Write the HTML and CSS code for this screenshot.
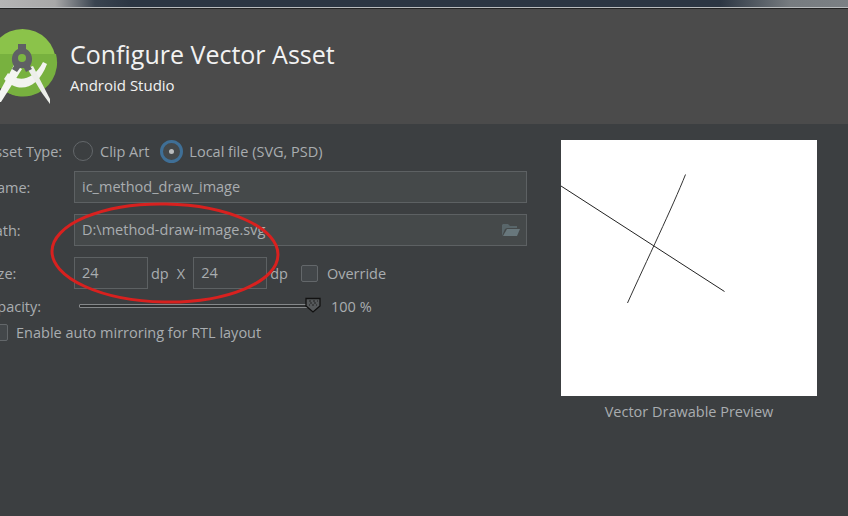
FILE: index.html
```html
<!DOCTYPE html>
<html lang="en">
<head>
    <meta charset="UTF-8">
    <title>Configure Vector Asset</title>
    <link rel="stylesheet" href="styles.css">
</head>
<body>
    <div class="desktop-strip"></div>
    <header class="banner">
        <svg class="logo" width="70" height="84" viewBox="0 0 70 84">
            <circle cx="33.500" cy="33.500" r="33.500" fill="#8bc34a"/>
            <path d="M1 25L67 25A33.500 33.500 0 0 1 1 42Z" fill="#78b13f"/>
            <path d="M19 44C27 52 43 54 54 33L58 35C48 62 28 64 15 50Z" fill="#f2f3f0"/>
            <path d="M25 36L33 40L12 73L5 73Z" fill="#f4f5f2"/>
            <path d="M38 39L44 37L61 70L61 75L53 64Z" fill="#eceeea"/>
            <path d="M29 15L37 15L37 20C43 23 45 31 41 37L43 40L37 43L35 39L31 39L28 43L23 40L25 37C21 31 23 23 29 20Z" fill="#5f6064"/>
            <circle cx="33" cy="29" r="4" fill="#7cb642"/>
        </svg>
        <div class="banner-text">
            <h1>Configure Vector Asset</h1>
            <p>Android Studio</p>
        </div>
    </header>
    <main class="content">
        <form class="form">
            <div class="row row-type">
                <span class="label">Asset Type:</span>
                <span class="radio"></span>
                <span class="radio-text">Clip Art</span>
                <span class="radio radio-on"></span>
                <span>Local file (SVG, PSD)</span>
            </div>
            <div class="row row-field">
                <span class="label">Name:</span>
                <div class="field">ic_method_draw_image</div>
            </div>
            <div class="row row-field">
                <span class="label">Path:</span>
                <div class="field">
                    D:\method-draw-image.svg
                    <svg class="folder" width="20" height="14" viewBox="0 0 20 14">
                        <path d="M1 13L1 2L2 1L7 1L9 3L16 3L16 5L6 5L4 6Z" fill="#59666a"/>
                        <path d="M2 13L6 6L19 6L16 13Z" fill="#68777c"/>
                    </svg>
                </div>
            </div>
            <div class="row row-size">
                <span class="label">Size:</span>
                <div class="field field-num">24</div>
                <span class="unit">dp</span>
                <span class="times">X</span>
                <div class="field field-num">24</div>
                <span class="unit">dp</span>
                <span class="check check-override"></span>
                <span>Override</span>
            </div>
            <div class="row row-opacity">
                <span class="label">Opacity:</span>
                <div class="slider">
                    <div class="track"></div>
                    <svg class="thumb" width="16" height="16" viewBox="0 0 16 16">
                        <path d="M1 1.500L15 1.500L15 9L8 15L1 9Z" fill="#55585a" stroke="#111" stroke-width="1.300"/>
                        <path d="M4 4H6M8 4H10M12 4H13M5 6H7M9 6H11M4 8H5M7 8H9M11 8H12" stroke="#222" stroke-width="1"/>
                    </svg>
                </div>
                <span class="percent">100 %</span>
            </div>
            <div class="row row-rtl">
                <span class="check"></span>
                <span>Enable auto mirroring for RTL layout</span>
            </div>
        </form>
        <aside class="preview">
            <svg class="canvas" width="256" height="256" viewBox="0 0 256 256">
                <path d="M0 46L163.500 151.500" fill="none" stroke="#222" stroke-width="1"/>
                <path d="M124.500 34.500C112 66 85 122 66.500 163" fill="none" stroke="#333" stroke-width="1"/>
            </svg>
            <p class="caption">Vector Drawable Preview</p>
        </aside>
    </main>
    <svg class="scribble" width="240" height="110" viewBox="0 0 240 110">
        <ellipse cx="119" cy="55" rx="113" ry="49" transform="rotate(1 119 55)" fill="none" stroke="#d8211f" stroke-width="3"/>
    </svg>
</body>
</html>
```
FILE: styles.css
```css
html, body { margin: 0; height: 100%; }
body { position: relative; width: 848px; height: 516px; overflow: hidden; background: #3c3f41; color: #a9adb0; font-family: "Open Sans", "Noto Sans", sans-serif; font-size: 14.5px; }

.desktop-strip { height: 7px; background: linear-gradient(90deg, #b5b5b5 0, #a8a8a8 55px, #3a4450 95px, #2c3643 130px, #2c3643 720px, #777c80 790px, #7b8084 100%); border-bottom: 1px solid #b9bcbe; box-shadow: 0 1px 0 #222; }

.banner { height: 115px; margin-top: 1px; background: #4b4b4b; display: flex; align-items: flex-start; }
.logo { margin: 20px 0 0 -11px; flex: none; }
.banner-text { margin-left: 11px; color: #f2f2f2; }
.banner h1 { margin: 26px 0 0; font-size: 25px; font-weight: 400; line-height: 38px; }
.banner p { margin: 2px 0 0; font-size: 15px; line-height: 20px; }

.content { display: flex; align-items: flex-start; }
.form { width: 561px; flex: none; }
.row { display: flex; align-items: center; white-space: nowrap; }
.label { width: 88px; margin-left: -14px; flex: none; }

.row-type { height: 30px; margin-top: 12px; }
.row-field { height: 32px; margin-top: 11px; }
.row-type + .row-field { margin-top: 5px; }
.row-size { height: 32px; margin-top: 11px; }
.row-opacity { height: 20px; margin-top: 7px; }
.row-rtl { height: 20px; margin-top: 6px; }

.radio { width: 18px; height: 18px; margin-left: -1px; border: 1px solid #63676a; border-radius: 50%; flex: none; }
.radio-text { margin-left: 7px; margin-right: 11px; }
.radio-on { position: relative; box-sizing: content-box; width: 17px; height: 17px; margin-left: 0; margin-right: 6px; border: 3px solid #3f6f96; background: #44484a; }
.radio-on::after { content: ""; position: absolute; left: 6px; top: 6px; width: 5px; height: 5px; border-radius: 50%; background: #b9bcbe; }

.field { position: relative; width: 453px; height: 32px; box-sizing: border-box; padding-left: 7px; border: 1px solid #5d6163; background: #45494a; line-height: 30px; }
.field-num { width: 74px; background: #3f4244; }
.folder { position: absolute; right: 5px; top: 8px; }

.unit { margin-left: 3px; }
.times { margin-left: 8px; margin-right: 8px; }
.check { width: 15px; height: 15px; border: 1px solid #63676a; border-radius: 2px; background: #43474a; flex: none; }
.check-override { margin-left: 13px; margin-right: 9px; }
.row-rtl .check { margin-left: -9px; margin-right: 8px; }

.slider { position: relative; width: 234px; height: 20px; margin-left: 5px; flex: none; }
.track { position: absolute; left: 0; right: 0; top: 8px; height: 2px; border: 1px solid #85888a; border-radius: 1px; background: #2f3132; }
.thumb { position: absolute; right: -8px; top: 1px; }
.percent { margin-left: 18px; }

.preview { margin-top: 16px; width: 256px; }
.canvas { display: block; background: #fff; }
.caption { margin: 6px 0 0; text-align: center; line-height: 19px; }

.scribble { position: absolute; left: 46px; top: 198px; }
```
